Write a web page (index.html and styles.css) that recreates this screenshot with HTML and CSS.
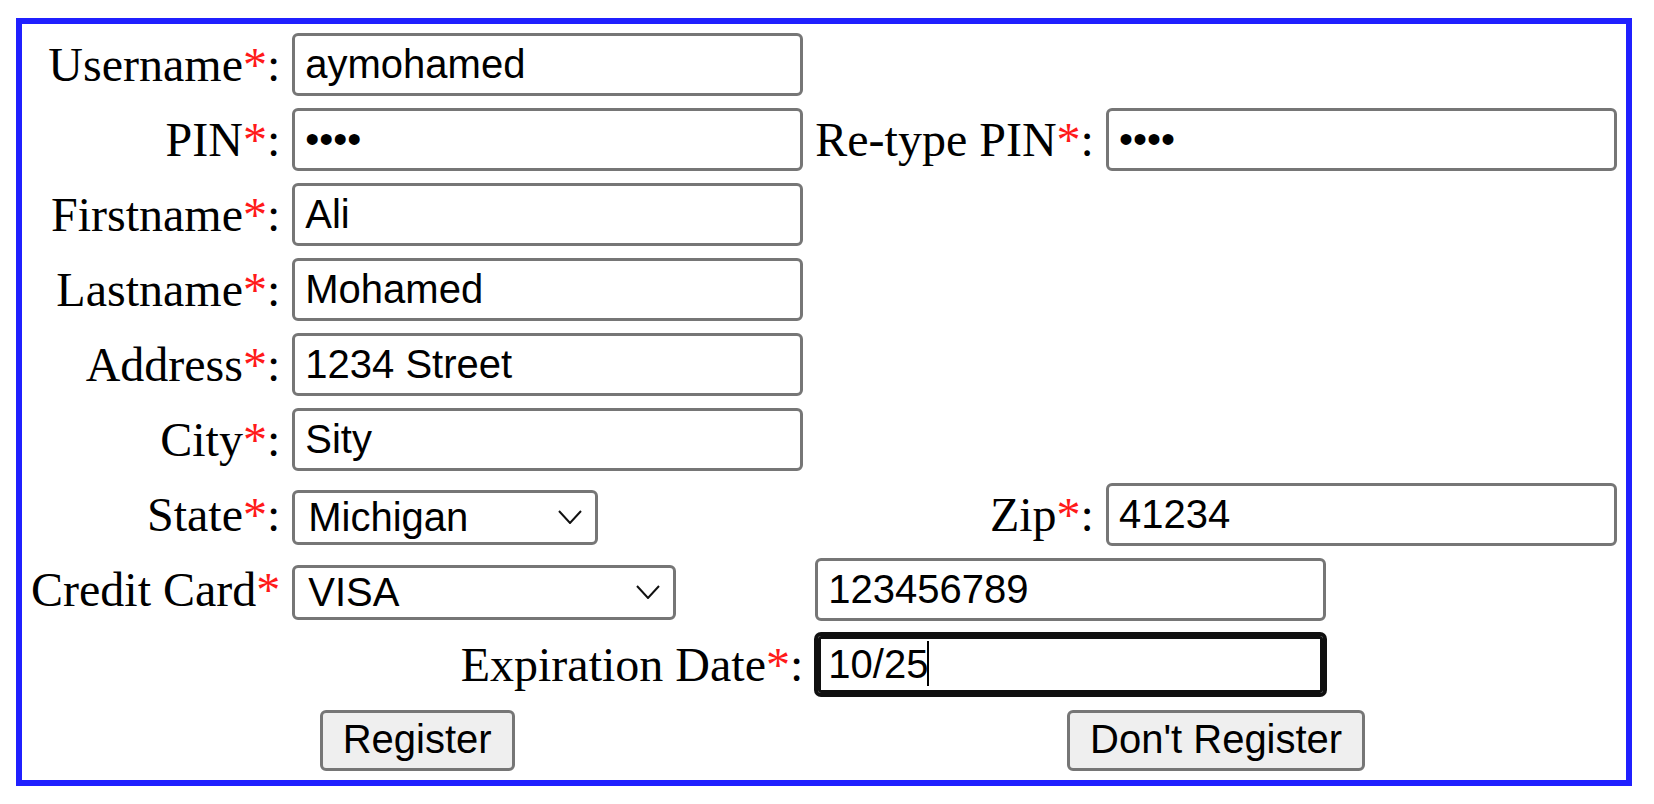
FILE: index.html
```html
<!DOCTYPE html>
<html lang="en">
<head>
<meta charset="utf-8">
<title>Register</title>
<link rel="stylesheet" href="styles.css">
</head>
<body>
<form class="reg-form">
  <table class="reg-table">
    <tr>
      <td class="lbl">Username<span class="req">*</span>:</td>
      <td><input class="field" type="text" value="aymohamed"></td>
      <td></td>
      <td></td>
    </tr>
    <tr>
      <td class="lbl">PIN<span class="req">*</span>:</td>
      <td><input class="field" type="password" value="1234"></td>
      <td class="lbl">Re-type PIN<span class="req">*</span>:</td>
      <td><input class="field" type="password" value="1234"></td>
    </tr>
    <tr>
      <td class="lbl">Firstname<span class="req">*</span>:</td>
      <td><input class="field" type="text" value="Ali"></td>
      <td></td>
      <td></td>
    </tr>
    <tr>
      <td class="lbl">Lastname<span class="req">*</span>:</td>
      <td><input class="field" type="text" value="Mohamed"></td>
      <td></td>
      <td></td>
    </tr>
    <tr>
      <td class="lbl">Address<span class="req">*</span>:</td>
      <td><input class="field" type="text" value="1234 Street"></td>
      <td></td>
      <td></td>
    </tr>
    <tr>
      <td class="lbl">City<span class="req">*</span>:</td>
      <td><input class="field" type="text" value="Sity"></td>
      <td></td>
      <td></td>
    </tr>
    <tr>
      <td class="lbl">State<span class="req">*</span>:</td>
      <td>
        <span class="select-wrap">
          <select class="select select-state"><option>Michigan</option><option>Ohio</option></select>
          <svg class="chevron" viewBox="0 0 24 14" width="24" height="14"><path d="M1 1 L12 13 L23 1" fill="none" stroke="#111" stroke-width="2"/></svg>
        </span>
      </td>
      <td class="lbl">Zip<span class="req">*</span>:</td>
      <td><input class="field" type="text" value="41234"></td>
    </tr>
    <tr>
      <td class="lbl">Credit Card<span class="req">*</span></td>
      <td>
        <span class="select-wrap">
          <select class="select select-card"><option>VISA</option><option>MasterCard</option></select>
          <svg class="chevron" viewBox="0 0 24 14" width="24" height="14"><path d="M1 1 L12 13 L23 1" fill="none" stroke="#111" stroke-width="2"/></svg>
        </span>
      </td>
      <td colspan="2"><input class="field" type="text" value="123456789"></td>
    </tr>
    <tr>
      <td class="lbl" colspan="2">Expiration Date<span class="req">*</span>:</td>
      <td colspan="2">
        <span class="caret-wrap">
          <input class="field field-active" type="text" value="10/25">
          <span class="caret"></span>
        </span>
      </td>
    </tr>
    <tr>
      <td class="btn-cell" colspan="2"><button class="btn" type="submit">Register</button></td>
      <td class="btn-cell" colspan="2"><button class="btn" type="reset">Don't Register</button></td>
    </tr>
  </table>
</form>
</body>
</html>
```

FILE: styles.css
```css
body {
  margin: 18px 16px;
  background: #ffffff;
}

.reg-form {
  margin: 0;
}

.reg-table {
  border: 6px solid #2020ff;
  border-spacing: 6px;
  font-family: "Liberation Serif", "Times New Roman", serif;
  font-size: 48px;
  color: #000000;
}

.reg-table td {
  padding: 3px;
  vertical-align: middle;
}

.lbl {
  text-align: right;
  white-space: nowrap;
}

.req {
  color: #ff1a1a;
}

.field {
  display: block;
  box-sizing: border-box;
  width: 511px;
  height: 63px;
  margin: 0;
  padding: 0 9px 0 10px;
  border: 3px solid #767676;
  border-radius: 6px;
  background: #ffffff;
  color: #000000;
  font-family: "Liberation Sans", Arial, sans-serif;
  font-size: 40px;
  outline: none;
}

.field-active {
  border-color: #101010;
  box-shadow: inset 0 0 0 3px #101010, 0 0 0 1px #101010;
}

.caret-wrap {
  position: relative;
  display: block;
  width: 511px;
}

.caret {
  position: absolute;
  left: 112px;
  top: 8px;
  width: 2px;
  height: 45px;
  background: #000000;
}

.select-wrap {
  position: relative;
  display: inline-block;
  vertical-align: middle;
}

.select {
  display: block;
  box-sizing: border-box;
  height: 55px;
  margin: 0;
  padding: 0 48px 0 13px;
  border: 3px solid #767676;
  border-radius: 6px;
  background: #ffffff;
  color: #000000;
  font-family: "Liberation Sans", Arial, sans-serif;
  font-size: 40px;
  -webkit-appearance: none;
  appearance: none;
}

.select-state {
  width: 306px;
}

.select-card {
  width: 384px;
}

.chevron {
  position: absolute;
  right: 16px;
  top: 20px;
  pointer-events: none;
}

.btn-cell {
  height: 63px;
  text-align: center;
}

.btn {
  box-sizing: border-box;
  height: 61px;
  margin: 0;
  padding: 0 20px 2px;
  border: 3px solid #767676;
  border-radius: 6px;
  background: #efefef;
  color: #000000;
  font-family: "Liberation Sans", Arial, sans-serif;
  font-size: 40px;
  vertical-align: middle;
}
```
